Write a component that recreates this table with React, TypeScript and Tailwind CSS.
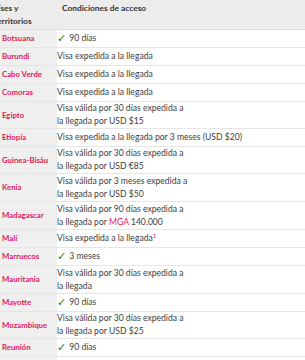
import React from "react";

type Row = { name: string; h: number; content: React.ReactNode };

const Check = ({ text }: { text: string }) => (
  <span className="flex items-center">
    <span className="text-[#2b7d1c] font-bold mr-[3px] text-[11px] leading-[13px]" style={{ fontFamily: '"DejaVu Sans", sans-serif' }}>
      ✓
    </span>
    {text}
  </span>
);

const rows: Row[] = [
  { name: "Botsuana", h: 18, content: <Check text="90 días" /> },
  { name: "Burundi", h: 18, content: "Visa expedida a la llegada" },
  { name: "Cabo Verde", h: 18, content: "Visa expedida a la llegada" },
  { name: "Comoras", h: 18, content: "Visa expedida a la llegada" },
  { name: "Egipto", h: 27, content: <>Visa válida por 30 días expedida a<br />la llegada por USD $15</> },
  { name: "Etiopía", h: 18, content: "Visa expedida a la llegada por 3 meses (USD $20)" },
  { name: "Guinea-Bisáu", h: 27, content: <>Visa válida por 30 días expedida a<br />la llegada por USD €85</> },
  { name: "Kenia", h: 28, content: <>Visa válida por 3 meses expedida a<br />la llegada por USD $50</> },
  {
    name: "Madagascar",
    h: 28,
    content: (
      <>
        Visa válida por 90 días expedida a<br />la llegada por <span className="text-[#e3175c]">MGA</span> 140.000
      </>
    ),
  },
  {
    name: "Malí",
    h: 18,
    content: (
      <>
        Visa expedida a la llegada<sup className="text-[#e3175c] text-[6px]">1</sup>
      </>
    ),
  },
  { name: "Marruecos", h: 18, content: <Check text="3 meses" /> },
  { name: "Mauritania", h: 28, content: <>Visa válida por 30 días expedida a<br />la llegada</> },
  { name: "Mayotte", h: 18, content: <Check text="90 días" /> },
  { name: "Mozambique", h: 27, content: <>Visa válida por 30 días expedida a<br />la llegada por USD $25</> },
  { name: "Reunión", h: 18, content: <Check text="90 días" /> },
  { name: "Ruanda", h: 18, content: "Visa expedida a la llegada" },
];

export default function App() {
  return (
    <div
      className="w-[305px] h-[360px] overflow-hidden bg-white text-[#3d3d3d] text-[8.6px] leading-[13px]"
      style={{ fontFamily: 'Lato, "Noto Sans", sans-serif' }}
    >
      <div className="flex h-[30px] bg-[#ececec] border-b border-[#dcdcdc] font-bold text-[#333] text-[8.4px]">
        <div className="w-[57px] overflow-hidden pt-[2px] whitespace-nowrap">
          <div className="ml-[-11px]">Países y</div>
          <div className="ml-[-6px]">territorios</div>
        </div>
        <div className="flex-1 pl-[5px] pt-[2px]">Condiciones de acceso</div>
      </div>
      {rows.map((r) => (
        <div
          key={r.name}
          className="flex border-b border-[#e6e6e6]"
          style={{ height: r.h }}
        >
          <div className="w-[57px] bg-[#efefef] pl-[2px] flex items-center font-bold text-[7.8px] text-[#e3175c] whitespace-nowrap">
            {r.name}
          </div>
          <div className="flex-1 flex items-center whitespace-nowrap">
            <div>{r.content}</div>
          </div>
        </div>
      ))}
    </div>
  );
}
